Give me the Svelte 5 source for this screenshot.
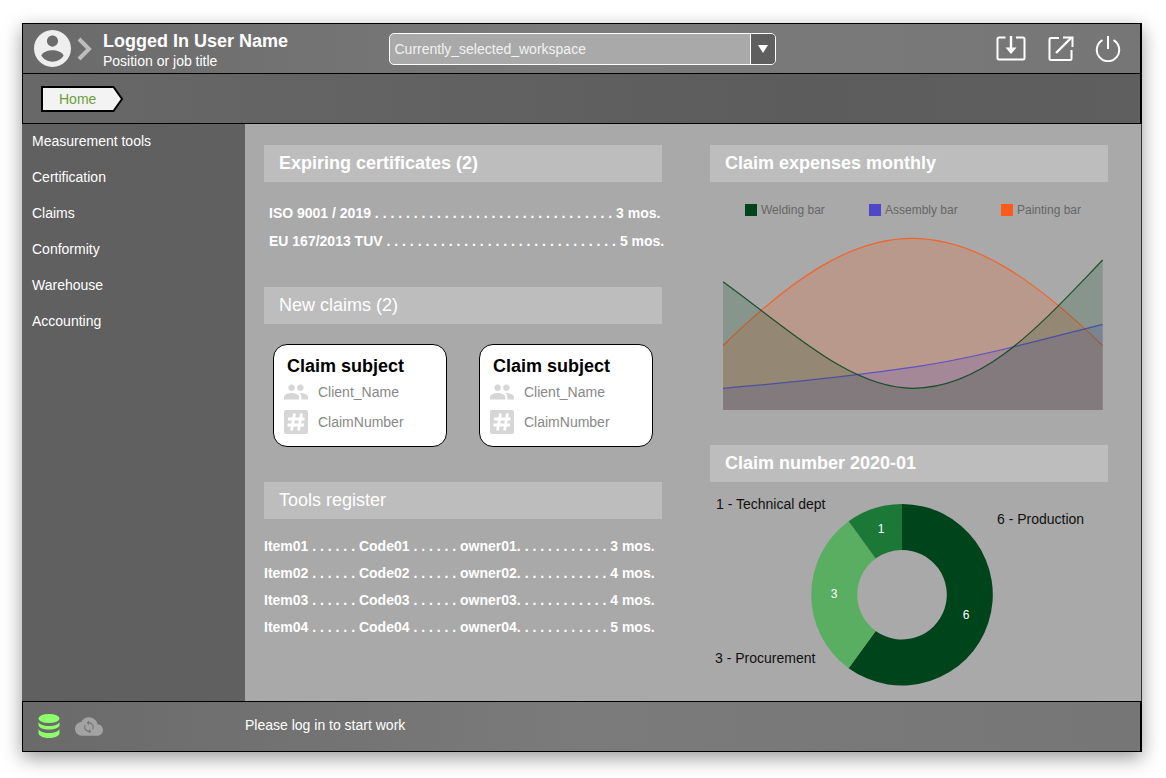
<script>
	const menu = ['Measurement tools', 'Certification', 'Claims', 'Conformity', 'Warehouse', 'Accounting'];

	const dots = (n) => Array(n).fill('.').join(' ');
	const certificates = [
		`ISO 9001 / 2019 ${dots(31)} 3 mos.`,
		`EU 167/2013 TUV ${dots(30)} 5 mos.`
	];

	const tools = [
		['Item01', 'Code01', 'owner01', '3 mos.'],
		['Item02', 'Code02', 'owner02', '4 mos.'],
		['Item03', 'Code03', 'owner03', '4 mos.'],
		['Item04', 'Code04', 'owner04', '5 mos.']
	].map(([a, b, c, d]) => `${a} ${dots(6)} ${b} ${dots(6)} ${c}. ${dots(11)} ${d}`);

	const legend = [
		{ label: 'Welding bar', color: '#00441b', x: 745 },
		{ label: 'Assembly bar', color: '#5047c8', x: 869 },
		{ label: 'Painting bar', color: '#fb5a19', x: 1001 }
	];

	const bottom = 410;
	// painted back to front: the first dataset ends up on top
	const curves = [
		{ color: '#fb5a19', line: 'M723 345.7C790 280 850 238.3 912 238.3C975 238.3 1035 280 1102.7 345.7' },
		{ color: '#5047c8', line: 'M723 388.3C800 382 860 375 916.7 366.7C980 357 1040 340 1102.7 324.3' },
		{ color: '#00441b', line: 'M723 281.7C790 330 850 388.3 913 388.3C985 388.3 1040 325 1102.7 260' }
	];

	// donut slices, clockwise from the top
	const cx = 902, cy = 594.7, ro = 90.8, ri = 44.8;
	const pt = (r, a) => `${(cx + r * Math.sin(a)).toFixed(2)} ${(cy - r * Math.cos(a)).toFixed(2)}`;
	function slice(from, to) {
		const a = (from / 10) * 2 * Math.PI;
		const b = (to / 10) * 2 * Math.PI;
		const large = to - from > 5 ? 1 : 0;
		return `M${pt(ro, a)}A${ro} ${ro} 0 ${large} 1 ${pt(ro, b)}L${pt(ri, b)}A${ri} ${ri} 0 ${large} 0 ${pt(ri, a)}Z`;
	}
	const slices = [
		{ d: slice(0, 6), color: '#00441b', n: 6, x: 966, y: 614 },
		{ d: slice(6, 9), color: '#5aae61', n: 3, x: 834, y: 593 },
		{ d: slice(9, 10), color: '#1b7837', n: 1, x: 881, y: 528 }
	];
</script>

<div class="page">
	<div class="frame">
		<header class="top">
			<div class="user">
				<svg class="avatar" viewBox="2 2 20 20">
					<path fill="#eee" d="M12 2C6.48 2 2 6.48 2 12s4.48 10 10 10 10-4.48 10-10S17.52 2 12 2zm0 3c1.66 0 3 1.34 3 3s-1.34 3-3 3-3-1.34-3-3 1.34-3 3-3zm0 14.2c-2.5 0-4.71-1.28-6-3.22.03-1.99 4-3.08 6-3.08 1.99 0 5.97 1.09 6 3.08-1.29 1.94-3.5 3.22-6 3.22z" />
				</svg>
				<svg class="chev" viewBox="0 0 15 24">
					<path fill="none" stroke="#bdbdbd" stroke-width="4" d="M2 2l10 10L2 22" />
				</svg>
				<div class="who">
					<div class="name">Logged In User Name</div>
					<div class="job">Position or job title</div>
				</div>
			</div>
			<div class="select">
				<span class="value">Currently_selected_workspace</span>
				<span class="arrow"></span>
			</div>
			<div class="actions">
				<svg class="dl" width="30" height="25" viewBox="0 0 30 25" fill="none" stroke="#fff" stroke-width="2">
					<path d="M9.500 1.500H3a1.500 1.500 0 0 0-1.500 1.500v19A1.500 1.500 0 0 0 3 23.500h24a1.500 1.500 0 0 0 1.500-1.500V3A1.500 1.500 0 0 0 27 1.500h-7" />
					<path d="M15 0v14" stroke-width="2.400" />
					<path fill="#fff" stroke="none" d="M9.500 11.500h11l-5.500 6.500z" />
				</svg>
				<svg width="26" height="25" viewBox="0 0 26 25" fill="none" stroke="#fff" stroke-width="2">
					<path d="M11 2H3a1.500 1.500 0 0 0-1.500 1.500v19A1.500 1.500 0 0 0 3 24h19a1.500 1.500 0 0 0 1.500-1.500V14" />
					<path d="M8 17L23 2" stroke-width="2.400" />
					<path d="M15 1.500h9.500V11" />
				</svg>
				<svg width="26" height="26" viewBox="0 0 26 26" fill="none" stroke="#fff" stroke-width="2">
					<path d="M7.500 4.200a11.200 11.200 0 1 0 11 0" />
					<path d="M13 0v13" />
				</svg>
			</div>
		</header>

		<nav class="crumbs">
			<div class="crumb">
				<svg width="83" height="26" viewBox="0 0 83 26">
					<path fill="#f3f3f3" stroke="#000" stroke-width="2" d="M1 1H72.500L81 13L72.500 25H1Z" />
				</svg>
				<span>Home</span>
			</div>
		</nav>

		<div class="body">
			<aside class="side">
				{#each menu as item}
					<div class="item">{item}</div>
				{/each}
			</aside>

			<main class="main">
				<section class="col">
					<h2 class="head bold">Expiring certificates (2)</h2>
					<div class="certs">
						{#each certificates as row}
							<div>{row}</div>
						{/each}
					</div>

					<h2 class="head">New claims (2)</h2>
					<div class="cards">
						{#each [0, 1] as card}
							<div class="card">
								<div class="subject">Claim subject</div>
								<div class="line">
									<svg width="24" height="26" viewBox="1 0 22 24" preserveAspectRatio="none">
										<path fill="#d6d6d6" d="M16 11c1.660 0 2.990-1.340 2.990-3S17.660 5 16 5c-1.660 0-3 1.340-3 3s1.340 3 3 3zm-8 0c1.660 0 2.990-1.340 2.990-3S9.660 5 8 5C6.340 5 5 6.340 5 8s1.340 3 3 3zm0 2c-2.330 0-7 1.170-7 3.500V19h14v-2.500c0-2.330-4.670-3.500-7-3.500zm8 0c-.29 0-.62.02-.97.05 1.160.84 1.970 1.970 1.970 3.450V19h6v-2.500c0-2.330-4.670-3.500-7-3.500z" />
									</svg>
									<span>Client_Name</span>
								</div>
								<div class="line">
									<svg width="24" height="24" viewBox="0 0 24 24">
										<rect width="24" height="24" rx="2" fill="#d6d6d6" />
										<path fill="none" stroke="#fff" stroke-width="2.800" d="M10.500 3.500L7.500 20.500M17.500 3.500L14.500 20.500M4 9H20.500M3.500 15H20" />
									</svg>
									<span>ClaimNumber</span>
								</div>
							</div>
						{/each}
					</div>

					<h2 class="head">Tools register</h2>
					<div class="tools">
						{#each tools as row}
							<div>{row}</div>
						{/each}
					</div>
				</section>

				<section class="col">
					<h2 class="head bold">Claim expenses monthly</h2>
					<svg class="chart" width="398" height="263" viewBox="710 182 398 263">
						{#each legend as l}
							<rect x={l.x} y="204" width="12" height="12" fill={l.color} />
							<text x={l.x + 16} y="214" class="legend">{l.label}</text>
						{/each}
						{#each curves as c}
							<path d="{c.line}V{bottom}H723Z" fill={c.color} fill-opacity="0.2" />
							<path d={c.line} fill="none" stroke={c.color} stroke-width="1.200" stroke-opacity="0.85" />
						{/each}
					</svg>

					<h2 class="head bold">Claim number 2020-01</h2>
					<svg class="chart" width="398" height="219" viewBox="710 482 398 219">
						{#each slices as s}
							<path d={s.d} fill={s.color} />
							<text x={s.x} y={s.y + 5} class="num">{s.n}</text>
						{/each}
						<text x="716" y="509" class="label">1 - Technical dept</text>
						<text x="997" y="524" class="label">6 - Production</text>
						<text x="715" y="663" class="label">3 - Procurement</text>
					</svg>
				</section>
			</main>
		</div>

		<footer class="bottom">
			<div class="status">
				<svg width="22" height="24" viewBox="0 0 22 24" fill="#8dff6a">
					<ellipse cx="11" cy="4.500" rx="10.500" ry="4.500" />
					<path d="M.5 7.500v3.500C.5 13.500 5 15.500 11 15.500s10.500-2 10.500-4.500V7.500C21.500 10 17 12 11 12S.5 10 .5 7.500z" />
					<path d="M.5 14.500V19c0 2.700 4.500 5 10.500 5s10.500-2.300 10.500-5v-4.500C21.500 17 17 19 11 19S.5 17 .5 14.500z" />
				</svg>
				<svg width="28" height="19" viewBox="0 4 24 16">
					<path fill="#a3a3a3" d="M19.35 10.04C18.67 6.59 15.64 4 12 4 9.11 4 6.600 5.640 5.350 8.040 2.340 8.360 0 10.910 0 14c0 3.310 2.690 6 6 6h13c2.760 0 5-2.240 5-5 0-2.640-2.050-4.780-4.650-4.960z" />
					<path fill="#777" transform="translate(12 12.500) scale(0.52) translate(-12 -12)" d="M12 4V1L8 5l4 4V6c3.310 0 6 2.690 6 6 0 1.010-.25 1.970-.7 2.800l1.460 1.460C19.540 15.030 20 13.570 20 12c0-4.420-3.580-8-8-8zm0 14c-3.310 0-6-2.690-6-6 0-1.010.25-1.970.7-2.800L5.240 7.740C4.460 8.970 4 10.430 4 12c0 4.420 3.580 8 8 8v3l4-4-4-4v3z" />
				</svg>
			</div>
			<div class="message">Please log in to start work</div>
		</footer>
	</div>
</div>

<style>
	:global(body) {
		background: #fff;
		font-family: 'Liberation Sans', Arial, sans-serif;
	}

	.page {
		height: 778px;
		box-sizing: border-box;
		padding: 23px 24px 26px 22px;
		overflow: hidden;
	}

	.frame {
		height: 729px;
		display: flex;
		flex-direction: column;
		box-shadow: 0 6px 18px rgba(0, 0, 0, 0.4);
		color: #fff;
	}

	/* Top bar */
	.top {
		height: 49px;
		flex: none;
		display: flex;
		align-items: center;
		border: 1px solid #000;
		border-right-width: 2px;
		background: linear-gradient(90deg, #6a6a6a, #7b7b7b 50%, #767676);
	}

	.user {
		width: 366px;
		display: flex;
		align-items: center;
		padding-left: 11px;
		box-sizing: border-box;
	}

	.avatar {
		width: 37px;
		height: 37px;
	}

	.chev {
		width: 15px;
		height: 24px;
		margin-left: 6px;
	}

	.who {
		margin-left: 11px;
		padding-top: 5px;
	}

	.name {
		font-size: 18px;
		font-weight: 700;
		line-height: 20px;
	}

	.job {
		font-size: 14px;
		line-height: 20px;
	}

	.select {
		width: 387px;
		height: 32px;
		box-sizing: border-box;
		display: flex;
		border: 1px solid #fff;
		border-radius: 5px;
		background: #a9a9a9;
		overflow: hidden;
		font-size: 14px;
		line-height: 30px;
		color: #f2f2f2;
	}

	.value {
		flex: 1;
		padding-left: 4.500px;
	}

	.arrow {
		width: 24px;
		border-left: 1px solid #fff;
		background: #5f5f5f;
		position: relative;
	}

	.arrow::after {
		content: '';
		position: absolute;
		left: 6.500px;
		top: 11px;
		border: 5.500px solid transparent;
		border-top: 8px solid #fff;
		border-bottom: 0;
	}

	.actions {
		margin-left: auto;
		display: flex;
		align-items: center;
		gap: 21px;
		padding-right: 19px;
	}

	.dl {
		margin-right: 1px;
	}

	/* Breadcrumb */
	.crumbs {
		height: 49px;
		flex: none;
		display: flex;
		align-items: center;
		padding-left: 18px;
		border-left: 1px solid #000;
		border-right: 2px solid #000;
		border-bottom: 1px solid #000;
		background: linear-gradient(90deg, #686868, #5c5c5c 70%, #5f5f5f);
	}

	.crumb {
		position: relative;
		width: 83px;
		height: 26px;
		font-size: 14px;
		line-height: 26px;
		color: #6aa03c;
	}

	.crumb svg {
		position: absolute;
		left: 0;
		top: 0;
	}

	.crumb span {
		position: relative;
		padding-left: 18px;
	}

	/* Body */
	.body {
		flex: 1;
		min-height: 0;
		display: flex;
	}

	.side {
		width: 223px;
		flex: none;
		background: #606060;
	}

	.item {
		height: 36px;
		line-height: 34px;
		padding-left: 10px;
		font-size: 14px;
	}

	.main {
		flex: 1;
		min-width: 0;
		display: flex;
		gap: 48px;
		padding: 21px 0 0 19px;
		background: #a9a9a9;
		border-right: 1px solid #333;
		overflow: hidden;
	}

	.col {
		width: 398px;
		flex: none;
	}

	.head {
		margin: 0;
		height: 37px;
		padding-left: 15px;
		background: #bdbdbd;
		font-size: 18px;
		font-weight: 400;
		line-height: 37px;
	}

	.head.bold {
		font-weight: 700;
	}

	.certs {
		padding: 17px 0 32px 5px;
		font-size: 14px;
		font-weight: 700;
		line-height: 28px;
		white-space: nowrap;
	}

	.cards {
		display: flex;
		gap: 32px;
		padding: 20px 0 35px 9px;
	}

	.card {
		width: 174px;
		height: 103px;
		box-sizing: border-box;
		border: 1px solid #000;
		border-radius: 14px;
		background: #fff;
		color: #888;
		padding: 11px 0 0 10px;
	}

	.subject {
		padding-left: 3px;
		font-size: 18px;
		font-weight: 700;
		line-height: 21px;
		color: #000;
	}

	.line {
		height: 30px;
		display: flex;
		align-items: center;
		font-size: 14px;
	}

	.line svg {
		width: 24px;
		flex: none;
		margin-right: 10px;
	}

	.tools {
		padding-top: 14px;
		font-size: 14px;
		font-weight: 700;
		line-height: 27px;
		white-space: nowrap;
	}

	.chart {
		display: block;
	}

	.legend {
		font-size: 12px;
		fill: #666;
	}

	.label {
		font-size: 14px;
		fill: #111;
	}

	.num {
		font-size: 12px;
		fill: #fff;
		text-anchor: middle;
	}

	/* Footer */
	.bottom {
		height: 49px;
		flex: none;
		display: flex;
		align-items: center;
		border: 1px solid #000;
		border-right-width: 2px;
		background: linear-gradient(90deg, #6a6a6a, #7b7b7b 50%, #767676);
		font-size: 14px;
	}

	.status {
		width: 222px;
		flex: none;
		display: flex;
		align-items: center;
		gap: 15px;
		padding: 0 0 1px 15px;
		box-sizing: border-box;
	}

	.message {
		padding-bottom: 3px;
	}
</style>
